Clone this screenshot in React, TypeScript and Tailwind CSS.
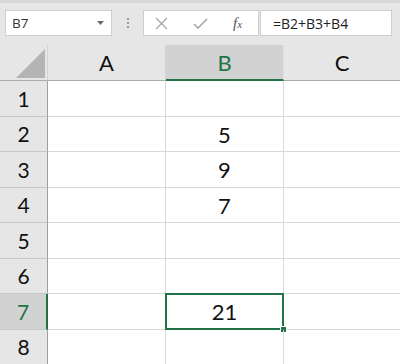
import React from "react";

const cellFont = { fontFamily: "Lato, 'Open Sans', sans-serif" };
const uiFont = { fontFamily: "'Open Sans', 'Noto Sans', sans-serif" };

const rows: { n: number; b: string; h: string }[] = [
  { n: 1, b: "", h: "h-[36px]" },
  { n: 2, b: "5", h: "h-[35px]" },
  { n: 3, b: "9", h: "h-[36px]" },
  { n: 4, b: "7", h: "h-[35px]" },
  { n: 5, b: "", h: "h-[36px]" },
  { n: 6, b: "", h: "h-[35px]" },
  { n: 7, b: "21", h: "h-[36px]" },
  { n: 8, b: "", h: "h-[35px]" },
];

export default function App() {
  return (
    <div className="w-[400px] h-[364px] overflow-hidden bg-white relative">
      {/* Toolbar */}
      <div className="h-[45px] bg-[#e6e6e6] flex flex-col">
        <div className="h-[3px] bg-[#d8d8d8]" />
        <div className="flex items-start pt-[7px]" style={uiFont}>
          <div className="ml-[5px] w-[107px] h-[26px] bg-white border border-[#cfcfcf] flex items-center justify-between pl-[6px] pr-[7px]">
            <span className="text-[13.5px] text-[#333]">B7</span>
            <svg width="7" height="4" viewBox="0 0 7 4">
              <path d="M0 0 L7 0 L3.5 4 Z" fill="#6a6a6a" />
            </svg>
          </div>
          <div className="w-[31px] h-[26px] flex flex-col items-center justify-center gap-[2px]">
            <div className="w-[2px] h-[2px] bg-[#9a9a9a]" />
            <div className="w-[2px] h-[2px] bg-[#9a9a9a]" />
            <div className="w-[2px] h-[2px] bg-[#9a9a9a]" />
          </div>
          <div className="w-[116px] h-[26px] bg-white border border-[#cfcfcf] flex items-center">
            <svg className="ml-[11px]" width="13" height="13" viewBox="0 0 13 13">
              <path d="M1 1 L12 12 M12 1 L1 12" stroke="#a6a6a6" strokeWidth="1.3" fill="none" />
            </svg>
            <svg className="ml-[25px]" width="15" height="11" viewBox="0 0 15 11">
              <path d="M1 6 L5 10 L14 1" stroke="#a6a6a6" strokeWidth="1.6" fill="none" />
            </svg>
            <span className="ml-[25px] text-[15px] italic text-[#555]" style={{ fontFamily: "'Liberation Serif', serif" }}>
              f<span className="text-[11px]">x</span>
            </span>
          </div>
          <div className="ml-[1px] w-[132px] h-[26px] bg-white border border-[#cfcfcf] flex items-center pl-[12px]">
            <span className="text-[14px] text-[#222]">=B2+B3+B4</span>
          </div>
        </div>
      </div>

      {/* Column header row */}
      <div className="flex h-[36px] bg-[#e6e6e6]" style={cellFont}>
        <div className="w-[48px] h-full border-b border-[#ababab] border-r border-r-[#d4d4d4] relative">
          <svg className="absolute left-[16px] top-[4px]" width="29" height="29" viewBox="0 0 29 29">
            <path d="M29 0 L29 29 L0 29 Z" fill="#b4b4b4" />
          </svg>
        </div>
        <div className="w-[118px] h-full border-b border-[#ababab] border-r border-r-[#d4d4d4] flex items-center justify-center text-[22px] text-[#111]">
          A
        </div>
        <div className="w-[118px] h-full bg-[#d2d2d2] border-b-2 border-[#217346] border-r border-r-[#e0e0e0] flex items-center justify-center text-[22px] text-[#217346]">
          B
        </div>
        <div className="flex-1 h-full border-b border-[#ababab] flex items-center justify-center text-[22px] text-[#111]">
          C
        </div>
      </div>

      {/* Body rows */}
      {rows.map((r) => {
        const sel = r.n === 7;
        return (
          <div key={r.n} className={`flex ${r.h}`} style={cellFont}>
            <div
              className={
                sel
                  ? "w-[48px] h-full bg-[#d2d2d2] border-b border-[#c8c8c8] border-r-2 border-r-[#217346] flex items-center justify-center text-[21px] text-[#217346]"
                  : "w-[48px] h-full bg-[#e6e6e6] border-b border-[#c8c8c8] border-r border-r-[#9f9f9f] flex items-center justify-center text-[21px] text-[#111]"
              }
            >
              <span>{r.n}</span>
            </div>
            <div className="w-[118px] h-full border-b border-r border-[#d9d9d9]" />
            <div className="w-[118px] h-full border-b border-r border-[#d9d9d9] relative flex items-center justify-center text-[22px] text-[#111]">
              {r.b}
              {sel && (
                <>
                  <div className="absolute left-[-1px] top-[-1px] right-[-1px] bottom-[-1px] border-2 border-[#217346]" />
                  <div className="absolute right-[-4px] bottom-[-4px] w-[7px] h-[7px] bg-[#217346] border border-white" />
                </>
              )}
            </div>
            <div className="flex-1 h-full border-b border-[#d9d9d9]" />
          </div>
        );
      })}
    </div>
  );
}
